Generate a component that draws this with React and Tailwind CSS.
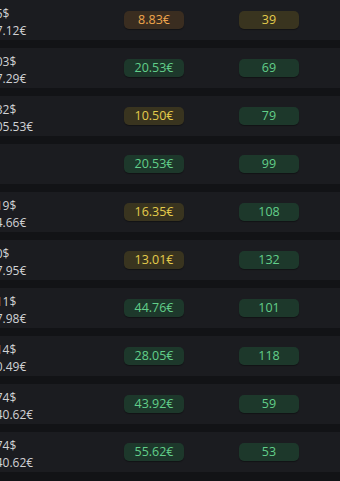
import React from 'react';

const tones = {
  green: 'bg-[#1d382b] text-[#62cf8a]',
  yellow: 'bg-[#39341f] text-[#e4cc4c]',
  orange: 'bg-[#3a2d20] text-[#eea54c]',
};

const rows = [
  { usd: '12.45$', eur: '1,047.12€', price: '8.83€', pt: 'orange', qty: '39', qt: 'yellow' },
  { usd: '120.03$', eur: '1,047.29€', price: '20.53€', pt: 'green', qty: '69', qt: 'green' },
  { usd: '112.32$', eur: '10,205.53€', price: '10.50€', pt: 'yellow', qty: '79', qt: 'green' },
  { usd: '', eur: '', price: '20.53€', pt: 'green', qty: '99', qt: 'green' },
  { usd: '118.19$', eur: '1,064.66€', price: '16.35€', pt: 'yellow', qty: '108', qt: 'green' },
  { usd: '16.50$', eur: '1,027.95€', price: '13.01€', pt: 'yellow', qty: '132', qt: 'green' },
  { usd: '140.11$', eur: '1,047.98€', price: '44.76€', pt: 'green', qty: '101', qt: 'green' },
  { usd: '141.14$', eur: '1,020.49€', price: '28.05€', pt: 'green', qty: '118', qt: 'green' },
  { usd: '185.74$', eur: '10,140.62€', price: '43.92€', pt: 'green', qty: '59', qt: 'green' },
  { usd: '185.74$', eur: '10,140.62€', price: '55.62€', pt: 'green', qty: '53', qt: 'green' },
];

const Pill = ({ children, tone }) => (
  <div className={`w-[60px] h-[18px] rounded-[5px] flex items-center justify-center text-[12.5px] leading-none shadow-[0_1px_1px_rgba(0,0,0,0.35)] ${tones[tone]}`}>
    {children}
  </div>
);

const App = () => {
  return (
    <div className="w-[340px] h-[481px] overflow-hidden bg-[#121316] flex flex-col gap-2" style={{ fontFamily: '"Open Sans", "Noto Sans", sans-serif' }}>
      {rows.map((row, i) => (
        <div key={i} className="h-10 shrink-0 bg-[#1b1c20] flex items-center">
          <div className="-ml-[28px] w-[152px] shrink-0 mt-[3px] text-[12px] leading-[17px] text-[#d2d3d6] whitespace-nowrap">
            <div>{row.usd}</div>
            <div>{row.eur}</div>
          </div>
          <Pill tone={row.pt}>{row.price}</Pill>
          <div className="w-[55px] shrink-0" />
          <Pill tone={row.qt}>{row.qty}</Pill>
        </div>
      ))}
    </div>
  );
};

export default App;
